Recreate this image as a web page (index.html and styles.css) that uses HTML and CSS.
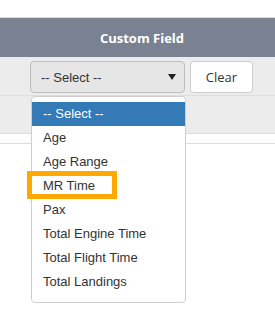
FILE: index.html
```html
<!DOCTYPE html>
<html>
<head>
<meta charset="utf-8">
<link rel="stylesheet" href="styles.css">
</head>
<body>
<div class="page">
  <div class="top-space"></div>
  <div class="header"><span class="header-title">Custom Field</span></div>
  <div class="filter-row">
    <div class="select-box">
      <span class="select-value">-- Select --</span>
      <svg class="select-arrow" width="8" height="6" viewBox="0 0 8 6"><path d="M0 0 L8 0 L4 6 Z" fill="#222"/></svg>
    </div>
    <button class="clear-btn">Clear</button>
  </div>
  <div class="data-row"></div>
  <div class="spacer-row"></div>
  <div class="rest"></div>

  <ul class="dropdown">
    <li class="opt selected">-- Select --</li>
    <li class="opt">Age</li>
    <li class="opt">Age Range</li>
    <li class="opt">MR Time</li>
    <li class="opt">Pax</li>
    <li class="opt">Total Engine Time</li>
    <li class="opt">Total Flight Time</li>
    <li class="opt">Total Landings</li>
  </ul>
  <div class="highlight"></div>
</div>
</body>
</html>
```
FILE: styles.css
```css
html, body {
  margin: 0;
  padding: 0;
  background: #ffffff;
}
.page {
  position: relative;
  width: 275px;
  height: 310px;
  overflow: hidden;
  font-family: "Liberation Sans", Arial, sans-serif;
}
.top-space {
  height: 17px;
  background: #ffffff;
}
.header {
  height: 39px;
  border-top: 1px solid #dcdcdc;
  background: #7a8191;
  display: flex;
  align-items: center;
  justify-content: center;
  padding-left: 9px;
}
.header-title {
  font-family: "Open Sans", sans-serif;
  font-weight: 700;
  font-size: 13px;
  color: #ffffff;
}
.filter-row {
  height: 39px;
  background: #ececec;
  display: flex;
  align-items: flex-start;
  padding-top: 4px;
  padding-left: 30px;
  box-sizing: border-box;
  gap: 5px;
  border-bottom: 1px solid #dedede;
}
.select-box {
  width: 155px;
  height: 32px;
  box-sizing: border-box;
  border: 1px solid #bdbdbd;
  border-radius: 4px;
  background: #e6e6e6;
  display: flex;
  align-items: center;
  justify-content: space-between;
  padding: 0 8px 0 10px;
}
.select-value {
  font-size: 13px;
  color: #333333;
}
.select-arrow {
  display: block;
}
.clear-btn {
  width: 63px;
  height: 32px;
  box-sizing: border-box;
  border: 1px solid #cccccc;
  border-radius: 4px;
  background: #ffffff;
  font-family: "Open Sans", sans-serif;
  font-size: 13px;
  color: #333333;
  padding: 0;
}
.data-row {
  height: 37px;
  background: #ececec;
  border-bottom: 1px solid #dcdcdc;
}
.spacer-row {
  height: 9px;
  background: #ffffff;
  border-bottom: 1px solid #dcdcdc;
}
.rest {
  background: #ffffff;
}
.dropdown {
  position: absolute;
  left: 31px;
  top: 96px;
  width: 155px;
  box-sizing: border-box;
  margin: 0;
  padding: 5px 0 8px 0;
  list-style: none;
  background: #ffffff;
  border: 1px solid #cfcfcf;
  border-radius: 4px;
}
.opt {
  height: 24px;
  line-height: 24px;
  padding-left: 11px;
  font-size: 13px;
  color: #333333;
}
.opt.selected {
  background: #337ab7;
  color: #ffffff;
}
.highlight {
  position: absolute;
  left: 27px;
  top: 171px;
  width: 90px;
  height: 28px;
  box-sizing: border-box;
  border: 5px solid #ffa800;
}
```
